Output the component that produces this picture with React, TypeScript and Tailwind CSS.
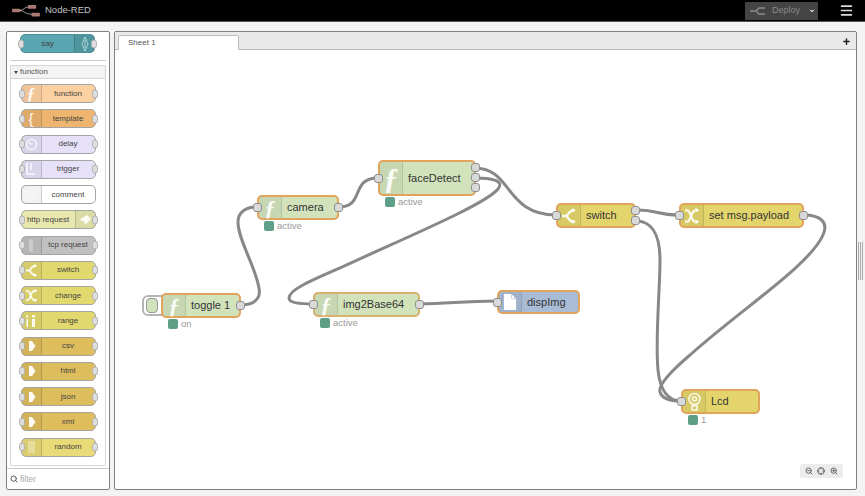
import React from "react";
import { Search, ZoomIn, ZoomOut, Crosshair, Plus, Menu, ChevronDown } from "lucide-react";

const F = ({ size = "text-[22px]" }: { size?: string }) => (
  <span className={`${size} leading-none text-white/90 italic font-bold [font-family:'Liberation_Serif',serif]`}>ƒ</span>
);

const Arrow = () => (
  <svg width="9" height="12" viewBox="0 0 9 12" fill="none"><path d="M2 1 H5 L8.5 6 L5 11 H2 Z" fill="#fff" fillOpacity="0.95" /></svg>
);
const SwitchIcon = ({ s = 14 }: { s?: number }) => (
  <svg width={s} height={s} viewBox="0 0 14 14" fill="none" stroke="#fff" strokeOpacity="0.9" strokeWidth="2"><path d="M1 7 H4 C7 7 6 2 11 2 M4 7 C7 7 6 12 11 12" /><path d="M10 0 L13 2 L10 4 Z M10 10 L13 12 L10 14 Z" fill="#fff" stroke="none" /></svg>
);
const ChangeIcon = ({ s = 14 }: { s?: number }) => (
  <svg width={s} height={s} viewBox="0 0 14 14" fill="none" stroke="#fff" strokeOpacity="0.9" strokeWidth="2"><path d="M1 2 H3 C6 2 6 12 10 12 M1 12 H3 C6 12 6 2 10 2" /><path d="M10 0 L13.5 2 L10 4 Z M10 10 L13.5 12 L10 14 Z" fill="#fff" stroke="none" /></svg>
);
const Delay = () => (
  <svg width="13" height="13" viewBox="0 0 14 14" fill="none" stroke="#fff" strokeOpacity="0.8" strokeWidth="1.4"><circle cx="7" cy="7" r="5.5" /><path d="M7 7 L4 4" /></svg>
);
const Trigger = () => (
  <svg width="12" height="14" viewBox="0 0 12 14" fill="none" stroke="#fff" strokeOpacity="0.85" strokeWidth="1.6"><path d="M2 1 V12 H10 M6 1 V8" /></svg>
);
const Wave = () => (
  <svg width="12" height="16" viewBox="0 0 12 16" fill="none" stroke="#bfe3e6" strokeOpacity="0.8" strokeWidth="1"><path d="M6 1 L9 8 L6 15 L3 8 Z M6 4 V12" /></svg>
);
const Cloud = () => (
  <svg width="14" height="12" viewBox="0 0 14 12"><path d="M9 1 L13 5 L7 11 L6 7 L1 6 Z" fill="#fff" fillOpacity="0.9" /></svg>
);
const Tcp = () => <div className="w-[4px] h-[13px] rounded-full bg-white/30" />;
const Range = () => (
  <svg width="12" height="14" viewBox="0 0 12 14" fill="#fff" fillOpacity="0.9"><rect x="1.5" y="5" width="1.5" height="8" /><rect x="7" y="5" width="3" height="8" /><rect x="7" y="1" width="3" height="2.5" /><rect x="1.5" y="1" width="1.5" height="2.5" /></svg>
);
const Rand = () => <div className="w-[7px] h-[12px] bg-white/30" />;
const Comment = () => <div className="w-[10px] h-[7px] bg-gray-100" />;
const TextBrace = () => <span className="text-[15px] leading-none text-white/90 [font-family:'Liberation_Sans',sans-serif]">{"{"}</span>;

type Pal = { label: string; bg: string; icon: React.ReactNode; right?: boolean; inPort?: boolean; outPort?: boolean };

const Port = ({ side, cls = "" }: { side: "l" | "r"; cls?: string }) => (
  <div className={`absolute top-1/2 -translate-y-1/2 w-[6px] h-[9px] rounded-[3px] bg-[#dedede] border border-[#b0b0b0] ${side === "l" ? "-left-[3px]" : "-right-[3px]"} ${cls}`} />
);

const PaletteNode = ({ label, bg, icon, right, inPort = true, outPort = true }: Pal) => (
  <div className={`relative shrink-0 w-[75px] h-[19px] rounded-[5px] border border-[#a5a5a5] flex items-stretch ${bg} ${right ? "flex-row-reverse" : ""}`}>
    <div className={`w-[20px] shrink-0 flex items-center justify-center bg-black/5 ${right ? "border-l" : "border-r"} border-black/15`}>{icon}</div>
    <div className="flex-1 flex items-center justify-center text-[8px] text-[#444] whitespace-nowrap">{label}</div>
    {inPort && <Port side="l" />}
    {outPort && <Port side="r" />}
  </div>
);

const palette: Pal[] = [
  { label: "function", bg: "bg-[#fdd0a2]", icon: <F size="text-[17px]" /> },
  { label: "template", bg: "bg-[#edb56f]", icon: <TextBrace /> },
  { label: "delay", bg: "bg-[#e6e0f8]", icon: <Delay /> },
  { label: "trigger", bg: "bg-[#e6e0f8]", icon: <Trigger /> },
  { label: "comment", bg: "bg-white", icon: <Comment />, inPort: false, outPort: false },
  { label: "http request", bg: "bg-[#e7e7ae]", icon: <Cloud />, right: true },
  { label: "tcp request", bg: "bg-[#c0c0c0]", icon: <Tcp /> },
  { label: "switch", bg: "bg-[#e2d96e]", icon: <SwitchIcon s={13} /> },
  { label: "change", bg: "bg-[#e2d96e]", icon: <ChangeIcon s={13} /> },
  { label: "range", bg: "bg-[#e2d96e]", icon: <Range /> },
  { label: "csv", bg: "bg-[#debd5c]", icon: <Arrow /> },
  { label: "html", bg: "bg-[#debd5c]", icon: <Arrow /> },
  { label: "json", bg: "bg-[#debd5c]", icon: <Arrow /> },
  { label: "xml", bg: "bg-[#debd5c]", icon: <Arrow /> },
  { label: "random", bg: "bg-[#e8da76]", icon: <Rand /> },
];

const Bulb = () => (
  <svg width="15" height="20" viewBox="0 0 15 20" fill="none" stroke="#fff" strokeOpacity="0.85" strokeWidth="1.6"><circle cx="7.5" cy="7" r="5.5" /><circle cx="7.5" cy="7" r="2" /><path d="M5 14 H10 V18 H5 Z" /></svg>
);
const Doc = () => (
  <svg width="14" height="18" viewBox="0 0 15 19"><path d="M1 1 H9 L14 6 V18 H1 Z" fill="#fff" /><path d="M9 1 V6 H14" fill="none" stroke="#cfcfcf" /></svg>
);

type CN = {
  label: string; x: number; y: number; w: number; h: number; bg: string; icon: React.ReactNode;
  input?: boolean; outs?: number; status?: string; border?: string;
};
const OX = 115, OY = 50;

const nodes: CN[] = [
  { label: "toggle 1", x: 161, y: 293, w: 80, h: 25, bg: "bg-[#d2e3bc]", icon: <F />, outs: 1, status: "on" },
  { label: "camera", x: 257, y: 195, w: 82, h: 25, bg: "bg-[#d2e3bc]", icon: <F />, input: true, outs: 1, status: "active" },
  { label: "faceDetect", x: 378, y: 160, w: 98, h: 36, bg: "bg-[#d2e3bc]", icon: <F size="text-[30px]" />, input: true, outs: 3, status: "active" },
  { label: "img2Base64", x: 313, y: 292, w: 107, h: 25, bg: "bg-[#d2e3bc]", icon: <F />, input: true, outs: 1, status: "active", border: "border-[#d8b070]" },
  { label: "dispImg", x: 497, y: 290, w: 83, h: 24, bg: "bg-[#a9bcd6]", icon: <Doc />, input: true, outs: 0 },
  { label: "switch", x: 556, y: 203, w: 80, h: 25, bg: "bg-[#e3d56b]", icon: <SwitchIcon s={16} />, input: true, outs: 2 },
  { label: "set msg.payload", x: 679, y: 203, w: 125, h: 25, bg: "bg-[#e3d56b]", icon: <ChangeIcon s={16} />, input: true, outs: 1 },
  { label: "Lcd", x: 681, y: 389, w: 79, h: 25, bg: "bg-[#e3d56b]", icon: <Bulb />, input: true, outs: 0, status: "1" },
];

const CanvasPort = ({ style }: { style: React.CSSProperties }) => (
  <div className="absolute w-[9px] h-[9px] rounded-[3px] bg-[#d9d9d9] border border-[#8f8f8f]" style={style} />
);

const CanvasNode = ({ n }: { n: CN }) => {
  const outY = n.outs === 3 ? [3, 13, 23] : n.outs === 2 ? [2.5, 12.5] : [(n.h - 9) / 2];
  return (
    <div className="absolute" style={{ left: n.x - OX, top: n.y - OY, width: n.w, height: n.h }}>
      <div className={`relative w-full h-full rounded-[5px] border-2 ${n.border ?? "border-[#e0a45c]"} ${n.bg} flex items-stretch`}>
        <div className="w-[23px] shrink-0 flex items-center justify-center bg-black/5 border-r border-black/10 rounded-l-[3px]">{n.icon}</div>
        <div className="flex-1 flex items-center text-[11px] text-[#333] whitespace-nowrap pl-[5px]">{n.label}</div>
      </div>
      {n.input && <CanvasPort style={{ left: -4, top: (n.h - 9) / 2 }} />}
      {n.outs ? outY.slice(0, n.outs).map((t, i) => <CanvasPort key={i} style={{ right: -4, top: t }} />) : null}
      {n.status && (
        <div className="absolute left-[7px] top-full mt-[1px] flex items-center gap-[3px] text-[9.5px] leading-none text-[#999]">
          <div className="w-[10px] h-[10px] rounded-[2px] bg-[#5f9f87]" />
          {n.status}
        </div>
      )}
    </div>
  );
};

const wires = [
  "M240 305 C255 305 261 298 259 288 C255 265 238 240 238 222 C238 212 246 207 257 207",
  "M339 207 C365 207 350 178 378 178",
  "M475 168 C512 168 505 215 556 215",
  "M475 178 C490 178 505 180 498 189 C485 205 400 240 340 268 C310 281 289 290 289 298 C289 303 300 304 313 304",
  "M419 304 C450 304 460 301 497 301",
  "M636 210 C660 210 655 215 679 215",
  "M636 221 C650 221 660 232 660 260 C660 290 655 340 658 370 C660 390 668 401 681 401",
  "M804 215 C820 215 829 222 823 235 C810 265 740 310 690 355 C670 372 658 385 660 392 C662 399 672 401 681 401",
];

const Logo = () => (
  <svg width="28" height="13" viewBox="0 0 30 14" fill="none">
    <path d="M8 7 C13 7 13 3 18 3 M8 7 C13 7 13 11 22 11" stroke="#ccc" strokeWidth="0.8" />
    <rect x="0" y="5" width="9" height="4" rx="1" fill="#a87a72" />
    <rect x="17" y="1" width="9" height="4" rx="1" fill="#a87a72" />
    <rect x="21" y="9.5" width="9" height="4" rx="1" fill="#a87a72" />
  </svg>
);

export default function App() {
  return (
    <div className="relative w-[865px] h-[496px] overflow-hidden bg-[#f3f3f3] flex flex-col [font-family:'Liberation_Sans',sans-serif]">
      <header className="h-[22px] shrink-0 bg-black flex items-center pl-3 border-b border-[#555]">
        <Logo />
        <span className="ml-[5px] text-[9.5px] text-[#c4c4c4]">Node-RED</span>
        <div className="ml-auto mr-[21px] w-[73px] h-[18px] bg-[#444] flex items-center text-[9px] text-[#888] pl-[5px]">
          <svg width="15" height="10" viewBox="0 0 15 10" fill="none" stroke="#8a8a8a" strokeWidth="1.5"><path d="M0 5 H6 M6 5 L9 2 H15 M6 5 L9 8 H15" /></svg>
          <span className="ml-[7px]">Deploy</span>
          <ChevronDown size={8} className="ml-[8px] text-[#bbb] fill-[#bbb]" strokeWidth={3} />
        </div>
        <Menu size={15} className="mr-[11px] text-[#ddd]" strokeWidth={2.5} />
      </header>

      <div className="flex-1 flex pl-[6px] pt-[9px] pb-[6px] pr-[8px] gap-[4px] min-h-0">
        <aside className="w-[104px] shrink-0 bg-white border border-[#808080] rounded-[2px] flex flex-col overflow-hidden">
          <div className="h-[29px] shrink-0 relative pl-[13px] pt-[2px]">
            <div className="relative w-[75px] h-[19px] rounded-[5px] border border-[#4d8f97] bg-[#59a6b0] flex items-stretch">
              <div className="flex-1 flex items-center justify-center text-[8px] text-[#444]">say</div>
              <div className="w-[20px] flex items-center justify-center bg-black/10 border-l border-black/15"><Wave /></div>
              <Port side="l" />
              <Port side="r" />
            </div>
            <div className="absolute left-[3px] right-[3px] bottom-0 h-px bg-[#ccc]" />
          </div>
          <div className="mx-[3px] mt-[4px] h-[401px] shrink-0 border border-[#d5d5d5] rounded-[1px] flex flex-col">
            <div className="h-[13px] shrink-0 bg-[#f3f3f3] border-b border-[#d5d5d5] flex items-center pl-[3px] gap-[2px] text-[8px] text-[#555]">
              <span className="w-0 h-0 border-l-[2.5px] border-r-[2.5px] border-t-[3.5px] border-l-transparent border-r-transparent border-t-[#444]" />
              function
            </div>
            <div className="flex flex-col items-center pt-[5px] gap-[6.25px]">
              {palette.map((p) => <PaletteNode key={p.label} {...p} />)}
            </div>
          </div>
          <div className="mt-auto h-[21px] shrink-0 border-t border-[#ccc] flex items-center pl-[3px] gap-[2px] text-[8.5px] text-[#aaa]">
            <Search size={8} className="text-[#555]" strokeWidth={3} />
            filter
          </div>
        </aside>

        <main className="flex-1 min-w-0 bg-white border border-[#808080] rounded-[2px] flex flex-col overflow-hidden">
          <div className="h-[18px] shrink-0 bg-[#e9e9e9] border-b border-[#bdbdbd] flex items-end pl-[3px] relative">
            <div className="w-[121px] h-[15px] bg-white border border-b-0 border-[#bdbdbd] rounded-t-[2px] flex items-center pl-[9px] text-[8px] text-[#555] -mb-px">Sheet 1</div>
            <Plus size={9} strokeWidth={4} className="absolute right-[5px] top-[5px] text-[#222]" />
          </div>
          <div className="relative flex-1">
            <svg className="absolute inset-0 w-full h-full" viewBox={`${OX} ${OY} 741 439`} fill="none" stroke="#888" strokeWidth="3" strokeLinecap="round">
              {wires.map((d) => <path key={d} d={d} />)}
            </svg>
            <div className="absolute w-[21px] h-[21px] border-2 border-[#b5b5b5] rounded-l-[6px] bg-white flex items-center justify-start pl-[2px]" style={{ left: 142 - OX, top: 295 - OY }}>
              <div className="w-[12px] h-[15px] rounded-[4px] bg-[#d2e3bc] border border-[#999]" />
            </div>
            {nodes.map((n) => <CanvasNode key={n.label} n={n} />)}
            <div className="absolute right-[13px] bottom-[11px] w-[43px] h-[14px] bg-[#ececec] rounded-[2px] flex items-center justify-around px-[3px] text-[#666]">
              <ZoomOut size={8} strokeWidth={3} />
              <Crosshair size={8} strokeWidth={3} />
              <ZoomIn size={8} strokeWidth={3} />
            </div>
          </div>
        </main>
      </div>

      <div className="absolute left-[858px] top-[242px] w-[5px] h-[38px] flex justify-between">
        <div className="w-px bg-[#aaa]" />
        <div className="w-px bg-[#aaa]" />
        <div className="w-px bg-[#aaa]" />
      </div>
    </div>
  );
}
